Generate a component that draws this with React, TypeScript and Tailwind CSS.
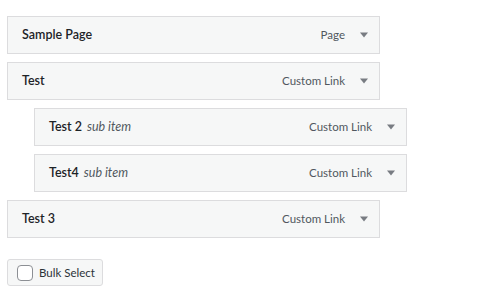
import React from 'react';

type Item = { title: string; type: string; sub?: boolean };

const items: Item[] = [
  { title: 'Sample Page', type: 'Page' },
  { title: 'Test', type: 'Custom Link' },
  { title: 'Test 2', type: 'Custom Link', sub: true },
  { title: 'Test4', type: 'Custom Link', sub: true },
  { title: 'Test 3', type: 'Custom Link' },
];

const Arrow = () => (
  <svg width="8" height="6" viewBox="0 0 8 6" className="block">
    <path d="M0 0.5 H8 L4 5.5 Z" fill="#787c82" />
  </svg>
);

const MenuItem = ({ item }: { item: Item }) => (
  <div className={item.sub ? 'pl-[27px]' : ''}>
    <div className="flex h-[38px] w-[373px] items-center border border-[#dcdcde] bg-[#f6f7f7] pl-[14px] pr-[11px]">
      <div className="flex-1 text-[12.5px] font-semibold text-[#1d2327]">
        {item.title}
        {item.sub && <span className="ml-[5px] text-[12.5px] font-normal italic text-[#50575e]">sub item</span>}
      </div>
      <span className="text-[11.5px] text-[#50575e]">{item.type}</span>
      <span className="ml-[15px]">
        <Arrow />
      </span>
    </div>
  </div>
);

export default function App() {
  return (
    <div className="min-h-[289px] w-[485px] bg-white pl-[7px] pt-[16px] font-['Lato',sans-serif]">
      <div className="flex flex-col gap-[8px]">
        {items.map((item) => (
          <MenuItem key={item.title} item={item} />
        ))}
      </div>
      <div className="mt-[21px]">
        <button className="flex h-[27px] w-[96px] items-center gap-[6px] whitespace-nowrap rounded-[3px] border border-[#dcdcde] bg-[#f6f7f7] pl-[9px] text-[11.5px] text-[#2c3338]">
          <span className="h-[16px] w-[16px] shrink-0 rounded-[4px] border border-[#8c8f94] bg-white" />
          Bulk Select
        </button>
      </div>
    </div>
  );
}
